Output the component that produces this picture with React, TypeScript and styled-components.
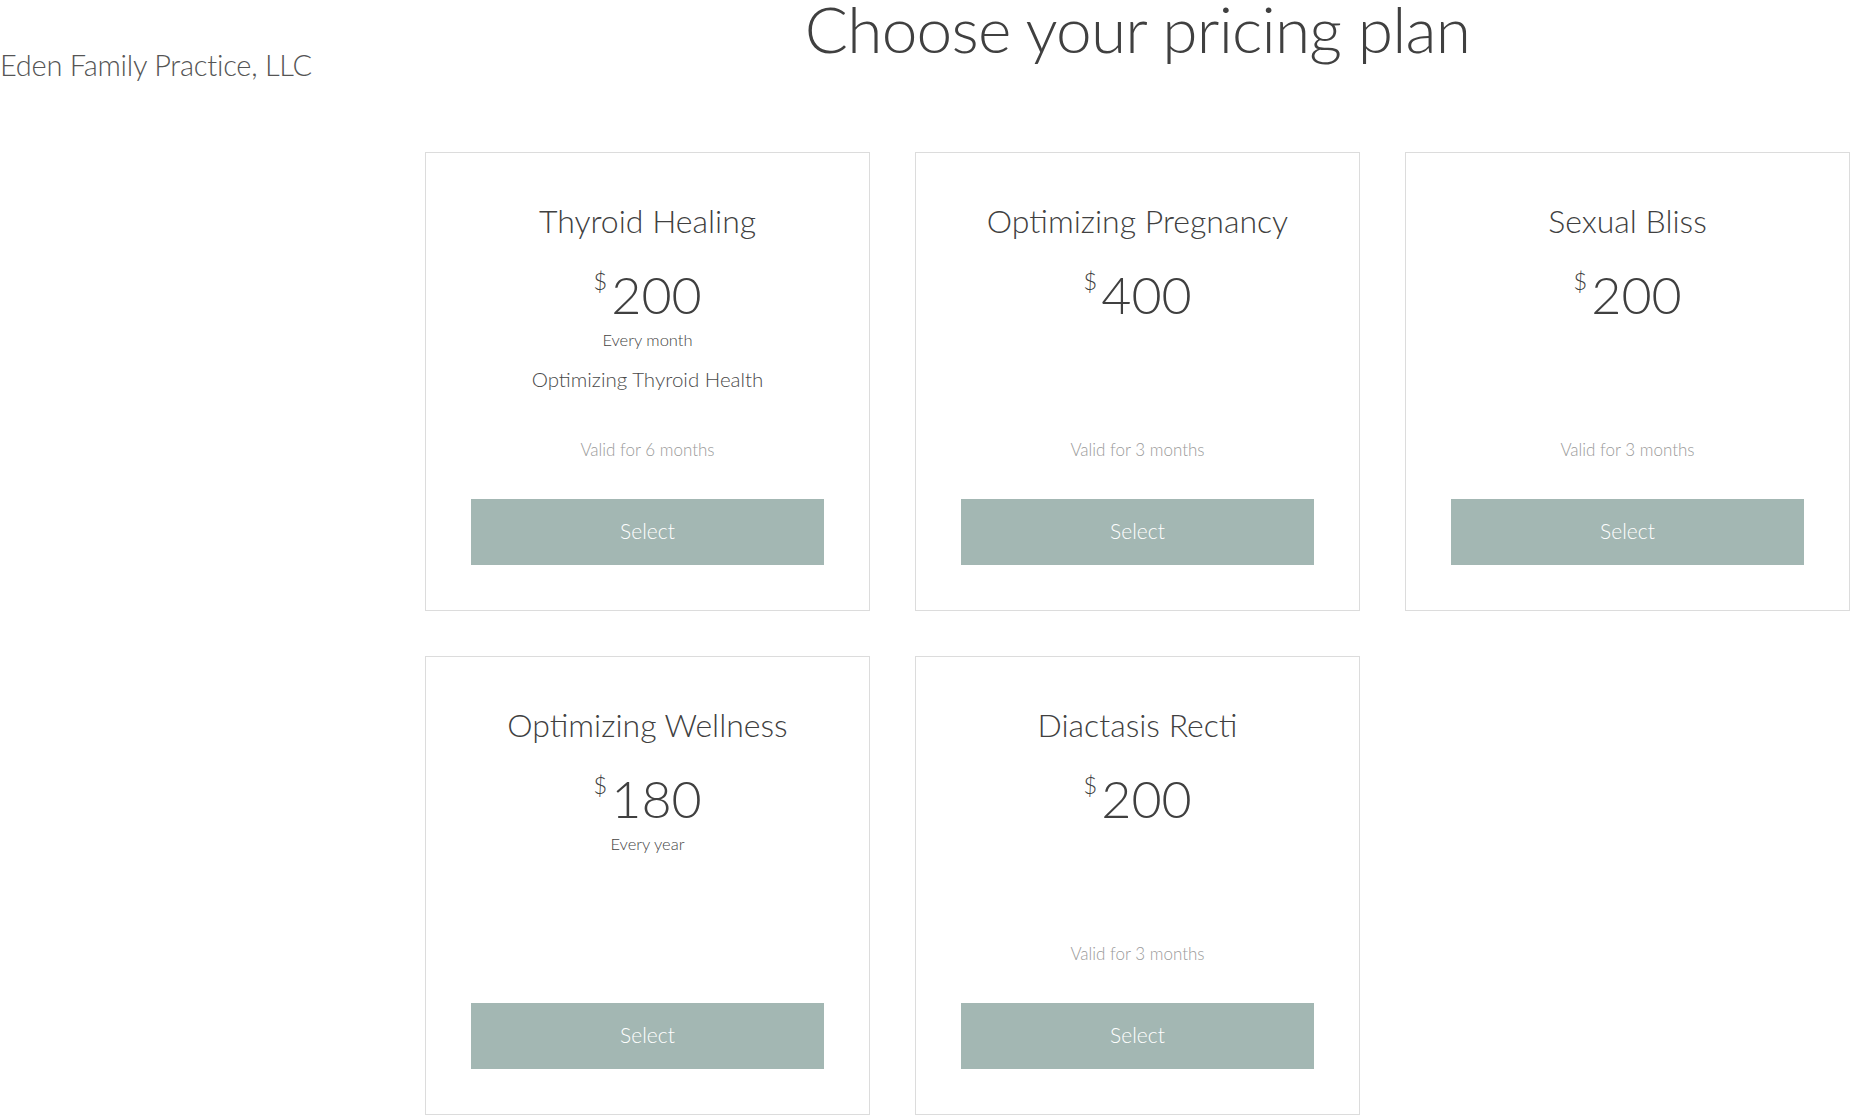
import React from 'react';
import styled, { createGlobalStyle } from 'styled-components';

const GlobalStyle = createGlobalStyle`
  html, body {
    margin: 0;
    padding: 0;
    background: #ffffff;
  }
  body {
    font-family: Lato, "Open Sans", "Liberation Sans", sans-serif;
    font-weight: 300;
    color: #404040;
  }
`;

type Plan = {
    name: string;
    price: string;
    frequency?: string;
    description?: string;
    validity?: string;
};

const plans: Plan[] = [
    { name: 'Thyroid Healing', price: '200', frequency: 'Every month', description: 'Optimizing Thyroid Health', validity: 'Valid for 6 months' },
    { name: 'Optimizing Pregnancy', price: '400', validity: 'Valid for 3 months' },
    { name: 'Sexual Bliss', price: '200', validity: 'Valid for 3 months' },
    { name: 'Optimizing Wellness', price: '180', frequency: 'Every year' },
    { name: 'Diactasis Recti', price: '200', validity: 'Valid for 3 months' },
];

const Page = styled.div`
  display: grid;
  grid-template-columns: 425px 1425px;
  align-items: start;
  min-height: 1119px;
`;

const Brand = styled.div`
  padding-top: 47px;
  font-size: 29px;
  line-height: 35px;
  letter-spacing: -0.25px;
  color: #555555;
  white-space: nowrap;
`;

const Main = styled.main`
  display: flex;
  flex-direction: column;
`;

const Heading = styled.h1`
  margin: 0;
  font-size: 64px;
  line-height: 58px;
  font-weight: 300;
  letter-spacing: -0.8px;
  text-align: center;
  color: #404040;
`;

const PlanGrid = styled.div`
  margin-top: 94px;
  display: grid;
  grid-template-columns: repeat(3, 445px);
  grid-auto-rows: 459px;
  gap: 45px;
`;

const Card = styled.div`
  box-sizing: border-box;
  display: flex;
  flex-direction: column;
  align-items: center;
  padding: 49px 45px 45px;
  border: 1px solid #dcdcdc;
  text-align: center;
`;

const PlanName = styled.h2`
  margin: 0;
  font-size: 32px;
  line-height: 38px;
  font-weight: 300;
  color: #404040;
`;

const Price = styled.div`
  margin-top: 26px;
  display: flex;
  align-items: flex-start;
  justify-content: center;
  font-size: 52px;
  line-height: 56px;
  color: #404040;
`;

const Currency = styled.span`
  font-size: 24px;
  line-height: 30px;
  margin-right: 4px;
`;

const Frequency = styled.div`
  margin-top: 8px;
  font-size: 16.5px;
  line-height: 20px;
  color: #444444;
`;

const Description = styled.div`
  margin-top: 16px;
  font-size: 20.5px;
  line-height: 26px;
  color: #4a4a4a;
`;

const Footer = styled.div`
  margin-top: auto;
  align-self: stretch;
  display: flex;
  flex-direction: column;
  align-items: center;
`;

const Validity = styled.div`
  font-size: 17px;
  line-height: 22px;
  color: #9a9a9a;
  margin-bottom: 38px;
`;

const SelectButton = styled.button`
  align-self: stretch;
  height: 66px;
  padding: 0 0 3px;
  border: none;
  background: #a3b7b3;
  color: #ffffff;
  font-family: inherit;
  font-weight: 300;
  font-size: 21px;
  cursor: pointer;
`;

const PlanCard = ({ plan }: { plan: Plan }) => (
    <Card>
        <PlanName>{plan.name}</PlanName>
        <Price>
            <Currency>$</Currency>
            {plan.price}
        </Price>
        {plan.frequency && <Frequency>{plan.frequency}</Frequency>}
        {plan.description && <Description>{plan.description}</Description>}
        <Footer>
            {plan.validity && <Validity>{plan.validity}</Validity>}
            <SelectButton>Select</SelectButton>
        </Footer>
    </Card>
);

export default function App() {
    return (
        <>
            <GlobalStyle/>
            <Page>
                <Brand>Eden Family Practice, LLC</Brand>
                <Main>
                    <Heading>Choose your pricing plan</Heading>
                    <PlanGrid>
                        {plans.map((plan) => <PlanCard key={plan.name} plan={plan}/>)}
                    </PlanGrid>
                </Main>
            </Page>
        </>
    );
}
